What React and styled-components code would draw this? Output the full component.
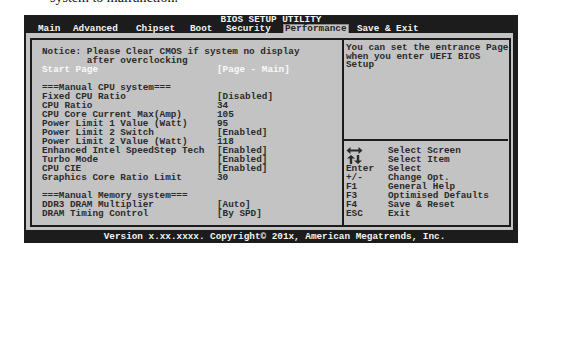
import React from 'react';
import styled, { createGlobalStyle } from 'styled-components';

const GlobalStyle = createGlobalStyle`
    body {
        margin: 0;
        background: #ffffff;
    }
`;

const Page = styled.div`
    width: 571px;
    height: 338px;
    padding-left: 24px;
    box-sizing: border-box;
    overflow: hidden;
`;

const CaptionClip = styled.div`
    height: 15px;
    overflow: hidden;
    padding-left: 26px;
`;

const Caption = styled.p`
    margin: -9px 0 0 0;
    font-family: 'Liberation Serif', serif;
    font-size: 14px;
    line-height: 14px;
    color: #111;
`;

const Frame = styled.div`
    width: 494px;
    background: #1c1c1c;
    display: flex;
    flex-direction: column;
    font-family: 'Liberation Mono', monospace;
    font-size: 9.33px;
    font-weight: bold;
`;

const Title = styled.div`
    height: 9px;
    line-height: 9px;
    text-align: center;
    color: #f4f4f4;
`;

const TabBar = styled.div`
    height: 9px;
    display: flex;
    align-items: center;
    padding-left: 14px;
    white-space: pre;
`;

const Tab = styled.span`
    margin-left: ${p => p.$gap}px;
    line-height: 8px;
    height: 8px;
    color: ${p => (p.$active ? '#262626' : '#f4f4f4')};
    background: ${p => (p.$active ? '#c4c4c4' : 'transparent')};
    padding: ${p => (p.$active ? '0 1px' : '0')};
    border: ${p => (p.$active ? '1px solid #8a8a8a' : 'none')};
`;

const Body = styled.div`
    margin: 0 5px 0 2px;
    padding: 5px 2px 3px 4px;
    background: #c3c3c3;
`;

const Inner = styled.div`
    height: 185px;
    border: 2px solid #1c1c1c;
    display: grid;
    grid-template-columns: 310px 2px 1fr;
    color: #2a2a2a;
`;

const Divider = styled.div`
    background: #1c1c1c;
`;

const LeftPane = styled.div`
    padding: 7px 0 0 10px;
`;

const Row = styled.div`
    display: grid;
    grid-template-columns: ${p => (p.$wide ? '1fr' : '175px 1fr')};
    height: 9px;
    line-height: 9px;
    white-space: pre;
    color: ${p => (p.$selected ? '#fafafa' : '#2a2a2a')};
`;

const RightPane = styled.div`
    display: flex;
    flex-direction: column;
`;

const Help = styled.div`
    height: 95px;
    padding: 4px 0 0 2px;
    line-height: 8.5px;
    white-space: pre;
`;

const Rule = styled.div`
    height: 2px;
    margin-right: 1px;
    background: #1c1c1c;
`;

const Legend = styled.div`
    padding: 5px 0 0 2px;
`;

const KeyRow = styled.div`
    display: grid;
    grid-template-columns: 42px 1fr;
    height: 9px;
    line-height: 9px;
    white-space: pre;
`;

const KeyCell = styled.span`
    display: flex;
    align-items: center;
`;

const Footer = styled.div`
    height: 13px;
    line-height: 13px;
    text-align: center;
    padding-left: 7px;
    color: #f4f4f4;
`;

const tabs = [
    { name: 'Main', gap: 0 },
    { name: 'Advanced', gap: 12.6 },
    { name: 'Chipset', gap: 18.2 },
    { name: 'Boot', gap: 14.8 },
    { name: 'Security', gap: 13.6 },
    { name: 'Performance', gap: 12.2, active: true },
    { name: 'Save & Exit', gap: 8.4 }
];

const rows = [
    { label: 'Notice: Please Clear CMOS if system no display', wide: true },
    { label: '        after overclocking', wide: true },
    { label: 'Start Page', value: '[Page - Main]', selected: true },
    { label: '' },
    { label: '===Manual CPU system===', wide: true },
    { label: 'Fixed CPU Ratio', value: '[Disabled]' },
    { label: 'CPU Ratio', value: '34' },
    { label: 'CPU Core Current Max(Amp)', value: '105' },
    { label: 'Power Limit 1 Value (Watt)', value: '95' },
    { label: 'Power Limit 2 Switch', value: '[Enabled]' },
    { label: 'Power Limit 2 Value (Watt)', value: '118' },
    { label: 'Enhanced Intel SpeedStep Tech', value: '[Enabled]' },
    { label: 'Turbo Mode', value: '[Enabled]' },
    { label: 'CPU CIE', value: '[Enabled]' },
    { label: 'Graphics Core Ratio Limit', value: '30' },
    { label: '' },
    { label: '===Manual Memory system===', wide: true },
    { label: 'DDR3 DRAM Multiplier', value: '[Auto]' },
    { label: 'DRAM Timing Control', value: '[By SPD]' }
];

const LeftRightArrow = () => (
    <svg width="17" height="7" viewBox="0 0 17 7">
        <path d="M0.5 3.5 L4.5 0 L4.5 2.5 L12.5 2.5 L12.5 0 L16.5 3.5 L12.5 7 L12.5 4.5 L4.5 4.5 L4.5 7 Z" fill="#2a2a2a" />
    </svg>
);

const UpDownArrows = () => (
    <svg width="17" height="9" viewBox="0 0 17 9">
        <path d="M5 0 L9 3.5 L6.2 3.5 L6.2 9 L3.8 9 L3.8 3.5 L1 3.5 Z" fill="#2a2a2a" />
        <path d="M12 9 L16 5.5 L13.2 5.5 L13.2 0 L10.8 0 L10.8 5.5 L8 5.5 Z" fill="#2a2a2a" />
    </svg>
);

const keys = [
    { key: <LeftRightArrow />, text: 'Select Screen' },
    { key: <UpDownArrows />, text: 'Select Item' },
    { key: 'Enter', text: 'Select' },
    { key: '+/-', text: 'Change Opt.' },
    { key: 'F1', text: 'General Help' },
    { key: 'F3', text: 'Optimised Defaults' },
    { key: 'F4', text: 'Save & Reset' },
    { key: 'ESC', text: 'Exit' }
];

const App = () => (
    <Page>
        <GlobalStyle />
        <CaptionClip>
            <Caption>system to malfunction.</Caption>
        </CaptionClip>
        <Frame>
            <Title>BIOS SETUP UTILITY</Title>
            <TabBar>
                {tabs.map(t => (
                    <Tab key={t.name} $gap={t.gap} $active={t.active}>
                        {t.name}
                    </Tab>
                ))}
            </TabBar>
            <Body>
                <Inner>
                    <LeftPane>
                        {rows.map((r, i) => (
                            <Row key={i} $wide={r.wide} $selected={r.selected}>
                                <span>{r.label}</span>
                                {!r.wide && <span>{r.value}</span>}
                            </Row>
                        ))}
                    </LeftPane>
                    <Divider />
                    <RightPane>
                        <Help>
                            {'You can set the entrance Page\nwhen you enter UEFI BIOS\nSetup'}
                        </Help>
                        <Rule />
                        <Legend>
                            {keys.map((k, i) => (
                                <KeyRow key={i}>
                                    <KeyCell>{k.key}</KeyCell>
                                    <span>{k.text}</span>
                                </KeyRow>
                            ))}
                        </Legend>
                    </RightPane>
                </Inner>
            </Body>
            <Footer>Version x.xx.xxxx. Copyright© 201x, American Megatrends, Inc.</Footer>
        </Frame>
    </Page>
);

export default App;
